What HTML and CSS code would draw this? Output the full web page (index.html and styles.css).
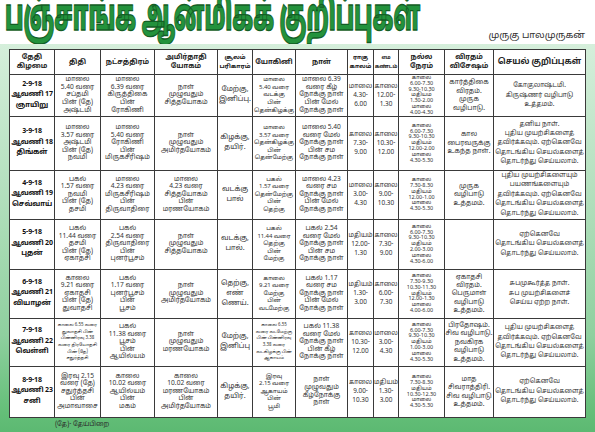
FILE: index.html
```html
<!DOCTYPE html>
<html lang="ta">
<head>
<meta charset="utf-8">
<link rel="stylesheet" href="styles.css">
</head>
<body>
<header class="head">
  <h1 class="title"><span class="title-in">பஞ்சாங்க ஆன்மிகக் குறிப்புகள்</span></h1>
  <div class="author">முருகு பாலமுருகன்</div>
</header>
<section class="panel">
<table class="pt">
  <colgroup>
    <col class="c1"><col class="c2"><col class="c3"><col class="c4"><col class="c5"><col class="c6">
    <col class="c7"><col class="c8"><col class="c9"><col class="c10"><col class="c11"><col class="c12">
  </colgroup>
  <thead>
    <tr class="hr">
      <th>தேதி<br>கிழமை</th><th>திதி</th><th>நட்சத்திரம்</th><th>அமிர்தாதி<br>யோகம்</th><th class="md">சூலம்<br>பரிகாரம்</th><th>யோகினி</th><th>நாள்</th><th class="sm">ராகு<br>காலம்</th><th class="xs">எம<br>கண்டம்</th><th>நல்ல<br>நேரம்</th><th>விரதம்<br>விசேஷம்</th><th class="big">செயல் குறிப்புகள்</th>
    </tr>
  </thead>
  <tbody>
    <tr class="r1">
      <td class="d">2-9-18<br>ஆவணி 17<br>ஞாயிறு</td>
      <td>மாலை<br>5.40 வரை<br>சப்தமி<br>பின் (தே)<br>அஷ்டமி</td>
      <td>மாலை<br>6.39 வரை<br>கிருத்திகை<br>பின்<br>ரோகிணி</td>
      <td>நாள்<br>முழுவதும்<br>சித்தயோகம்</td>
      <td class="s">மேற்கு,<br>இனிப்பு.</td>
      <td class="y">மாலை<br>5.40 வரை<br>வடக்கு<br>பின்<br>தென்கிழக்கு</td>
      <td>மாலை 6.39<br>வரை கீழ்<br>நோக்கு நாள்<br>பின் மேல்<br>நோக்கு நாள்</td>
      <td class="t">மாலை<br>4.30-<br>6.00</td>
      <td class="t">காலை<br>12.00-<br>1.30</td>
      <td class="n">காலை<br>6.00-7.30<br>9.30-10.30<br>மதியம்<br>1.30-2.00<br>மாலை<br>4.00-4.30</td>
      <td class="v">கார்த்திகை<br>விரதம்.<br>முருக<br>வழிபாடு.</td>
      <td class="k">கோகுலாஷ்டமி.<br>கிருஷ்ணர் வழிபாடு<br>உத்தமம்.</td>
    </tr>
    <tr class="r2">
      <td class="d">3-9-18<br>ஆவணி 18<br>திங்கள்</td>
      <td>மாலை<br>3.57 வரை<br>அஷ்டமி<br>பின் (தே)<br>நவமி</td>
      <td>மாலை<br>5.40 வரை<br>ரோகிணி<br>பின்<br>மிருகசீரிஷம்</td>
      <td>நாள்<br>முழுவதும்<br>அமிர்தயோகம்</td>
      <td class="s">கிழக்கு,<br>தயிர்.</td>
      <td class="y">மாலை<br>3.57 வரை<br>தென்கிழக்கு<br>பின்<br>தென்மேற்கு</td>
      <td>மாலை 5.40<br>வரை மேல்<br>நோக்கு நாள்<br>பின் சம<br>நோக்கு நாள்</td>
      <td class="t">காலை<br>7.30-<br>9.00</td>
      <td class="t">காலை<br>10.30-<br>12.00</td>
      <td class="n">காலை<br>6.00-7.30<br>9.30-10.30<br>மதியம்<br>12.00-2.00<br>மாலை<br>4.30-5.30</td>
      <td class="v">கால<br>பைரவருக்கு<br>உகந்த நாள்.</td>
      <td class="k">தனிய நாள்.<br>புதிய முயற்சிகளைத்<br>தவிர்க்கவும். ஏற்கெனவே<br>தொடங்கிய செயல்களைத்<br>தொடர்ந்து செய்யலாம்.</td>
    </tr>
    <tr class="r3">
      <td class="d">4-9-18<br>ஆவணி 19<br>செவ்வாய்</td>
      <td>பகல்<br>1.57 வரை<br>நவமி<br>பின் (தே)<br>தசமி</td>
      <td>மாலை<br>4.23 வரை<br>மிருகசீரிஷம்<br>பின்<br>திருவாதிரை</td>
      <td>மாலை<br>4.23 வரை<br>சித்தயோகம்<br>பின்<br>மரணயோகம்</td>
      <td class="s">வடக்கு<br>பால்</td>
      <td class="y">பகல்<br>1.57 வரை<br>தென்மேற்கு<br>பின்<br>தெற்கு</td>
      <td>மாலை 4.23<br>வரை சம<br>நோக்கு நாள்<br>பின் மேல்<br>நோக்கு நாள்</td>
      <td class="t">மாலை<br>3.00-<br>4.30</td>
      <td class="t">காலை<br>9.00-<br>10.30</td>
      <td class="n">காலை<br>7.30-8.30<br>மதியம்<br>12.00-1.00<br>மாலை<br>4.30-5.30</td>
      <td class="v">முருக<br>வழிபாடு<br>உத்தமம்.</td>
      <td class="k">புதிய முயற்சிகளையும்<br>பயணங்களையும்<br>தவிர்க்கவும். ஏற்கெனவே<br>தொடங்கிய செயல்களைத்<br>தொடர்ந்து செய்யலாம்.</td>
    </tr>
    <tr class="r4">
      <td class="d">5-9-18<br>ஆவணி 20<br>புதன்</td>
      <td>பகல்<br>11.44 வரை<br>தசமி<br>பின் (தே)<br>ஏகாதசி</td>
      <td>பகல்<br>2.54 வரை<br>திருவாதிரை<br>பின்<br>புனர்பூசம்</td>
      <td>நாள்<br>முழுவதும்<br>சித்தயோகம்</td>
      <td class="s">வடக்கு,<br>பால்.</td>
      <td class="y">பகல்<br>11.44 வரை<br>தெற்கு<br>பின்<br>மேற்கு</td>
      <td>பகல் 2.54<br>வரை மேல்<br>நோக்கு நாள்<br>பின் சம<br>நோக்கு நாள்</td>
      <td class="t">மதியம்<br>12.00-<br>1.30</td>
      <td class="t">காலை<br>7.30-<br>9.00</td>
      <td class="n">காலை<br>6.00-7.30<br>9.30-10.30<br>மதியம்<br>2.00-3.00<br>மாலை<br>4.30-6.00</td>
      <td class="v"></td>
      <td class="k">ஏற்கெனவே<br>தொடங்கிய செயல்களைத்<br>தொடர்ந்து செய்யலாம்.</td>
    </tr>
    <tr class="r5">
      <td class="d">6-9-18<br>ஆவணி 21<br>வியாழன்</td>
      <td>காலை<br>9.21 வரை<br>ஏகாதசி<br>பின் (தே)<br>துவாதசி</td>
      <td>பகல்<br>1.17 வரை<br>புனர்பூசம்<br>பின்<br>பூசம்</td>
      <td>நாள்<br>முழுவதும்<br>அமிர்தயோகம்</td>
      <td class="s">தெற்கு,<br>எண்<br>ணெய்.</td>
      <td class="y">காலை<br>9.21 வரை<br>மேற்கு<br>பின்<br>வடமேற்கு</td>
      <td>பகல் 1.17<br>வரை சம<br>நோக்கு நாள்<br>பின் மேல்<br>நோக்கு நாள்</td>
      <td class="t">மதியம்<br>1.30-<br>3.00</td>
      <td class="t">காலை<br>6.00-<br>7.30</td>
      <td class="n">காலை<br>7.30-9.30<br>10.30-11.30<br>மதியம்<br>12.00-1.30<br>மாலை<br>4.00-6.00</td>
      <td class="v">ஏகாதசி<br>விரதம்.<br>பெருமாள்<br>வழிபாடு<br>உத்தமம்.</td>
      <td class="k">சுபமுகூர்த்த நாள்.<br>சுப முயற்சிகளைச்<br>செய்ய ஏற்ற நாள்.</td>
    </tr>
    <tr class="r6">
      <td class="d">7-9-18<br>ஆவணி 22<br>வெள்ளி</td>
      <td class="tiny">காலை 6.55 வரை<br>துவாதசி பின்<br>பின்னிரவு 3.38<br>வரை திரயோதசி<br>பின் (தே)<br>சதுர்த்தசி</td>
      <td>பகல்<br>11.38 வரை<br>பூசம்<br>பின்<br>ஆயில்யம்</td>
      <td>நாள்<br>முழுவதும்<br>மரணயோகம்</td>
      <td class="s">மேற்கு,<br>இனிப்பு</td>
      <td class="tiny">காலை 6.55<br>வரை வடமேற்கு<br>பின் பின்னிரவு<br>3.38 வரை<br>வடகிழக்கு பின்<br>ஆகாயம்</td>
      <td>பகல் 11.38<br>வரை மேல்<br>நோக்கு நாள்<br>பின் கீழ்<br>நோக்கு நாள்</td>
      <td class="t">காலை<br>10.30-<br>12.00</td>
      <td class="t">மாலை<br>3.00-<br>4.30</td>
      <td class="n">காலை<br>6.00-7.30<br>9.30-10.30<br>மதியம்<br>1.00-3.00<br>மாலை<br>4.30-5.30</td>
      <td class="v">பிரதோஷம்.<br>சிவ வழிபாடு.<br>நவகிரக<br>வழிபாடு<br>உத்தமம்.</td>
      <td class="k">புதிய முயற்சிகளைத்<br>தவிர்க்கவும். ஏற்கெனவே<br>தொடங்கிய செயல்களைத்<br>தொடர்ந்து செய்யலாம்.</td>
    </tr>
    <tr class="r7">
      <td class="d">8-9-18<br>ஆவணி 23<br>சனி</td>
      <td>இரவு 2.15<br>வரை (தே)<br>சதுர்த்தசி<br>பின்<br>அமாவாசை</td>
      <td>காலை<br>10.02 வரை<br>ஆயில்யம்<br>பின்<br>மகம்</td>
      <td>காலை<br>10.02 வரை<br>மரணயோகம்<br>பின்<br>அமிர்தயோகம்</td>
      <td class="s">கிழக்கு,<br>தயிர்.</td>
      <td class="y">இரவு<br>2.15 வரை<br>ஆகாயம்<br>பின்<br>பூமி</td>
      <td>நாள்<br>முழுவதும்<br>கீழ்நோக்கு<br>நாள்</td>
      <td class="t">காலை<br>9.00-<br>10.30</td>
      <td class="t">மதியம்<br>1.30-<br>3.00</td>
      <td class="n">காலை<br>7.30-8.30<br>மதியம்<br>10.30-12.30<br>மாலை<br>4.30-5.30</td>
      <td class="v">மாத<br>சிவராத்திரி.<br>சிவ வழிபாடு<br>உத்தமம்.</td>
      <td class="k">ஏற்கெனவே<br>தொடங்கிய செயல்களைத்<br>தொடர்ந்து செய்யலாம்.</td>
    </tr>
  </tbody>
</table>
<p class="note">(தே)- தேய்பிறை</p>
</section>
</body>
</html>
```

FILE: styles.css
```css
html, body {
  margin: 0;
  padding: 0;
}
body {
  width: 595px;
  height: 432px;
  overflow: hidden;
  background: #fff;
  font-family: "Noto Sans Tamil", "Lohit Tamil", "Noto Sans", "DejaVu Sans", sans-serif;
  color: #2b2b2b;
}
.head {
  height: 44px;
  display: flex;
  align-items: flex-end;
  padding: 0 10px 0 5px;
  box-sizing: border-box;
}
.title {
  flex: none;
  width: 425px;
  height: 44px;
  margin: 0;
  overflow: hidden;
  white-space: nowrap;
}
.title-in {
  display: inline-block;
  font-size: 44px;
  line-height: 48px;
  margin-top: -5px;
  font-weight: 900;
  color: #23923c;
  -webkit-text-stroke: 1.3px #135e25;
  transform: scaleX(0.49);
  transform-origin: left top;
}
.author {
  margin-left: auto;
  font-size: 9.5px;
  line-height: 12px;
  color: #333;
  margin-bottom: 2px;
}
.panel {
  height: 388px;
  box-sizing: border-box;
  padding: 5px 10px 0 9px;
  background: linear-gradient(to bottom, #d5efdb 0%, #b6e1c0 35%, #8fd09f 75%, #64be78 95%, #5cb972 100%);
}
.pt {
  width: 576px;
  border-collapse: collapse;
  table-layout: fixed;
  background: #fff;
  border: 1.5px solid #333;
}
.c1 { width: 45px; }
.c2 { width: 46px; }
.c3 { width: 54px; }
.c4 { width: 63px; }
.c5 { width: 35px; }
.c6 { width: 43px; }
.c7 { width: 52px; }
.c8 { width: 26px; }
.c9 { width: 25px; }
.c10 { width: 46px; }
.c11 { width: 49px; }
.c12 { width: 92px; }
.pt th, .pt td {
  border: 1px solid #3a3a3a;
  padding: 0;
  text-align: center;
  vertical-align: middle;
  overflow: hidden;
  white-space: nowrap;
}
.pt th {
  font-size: 7px;
  line-height: 9px;
  font-weight: 700;
  color: #222;
}
.pt th.md { font-size: 6.2px; letter-spacing: -0.1px; }
.pt th.sm { font-size: 6px; }
.pt th.xs { font-size: 5.2px; letter-spacing: -0.1px; }
.pt th.big { font-size: 8px; }
.pt td {
  font-size: 6.6px;
  line-height: 7.6px;
  color: #333;
}
.pt td.d {
  font-size: 7px;
  line-height: 10.5px;
  font-weight: 700;
  letter-spacing: -0.15px;
  color: #111;
}
.pt td.y { font-size: 6px; letter-spacing: -0.1px; }
.pt td.s { font-size: 7.2px; line-height: 10px; }
.pt td.t { font-size: 6.4px; line-height: 9px; }
.pt td.n { font-size: 5.4px; line-height: 5.8px; }
.pt td.v { font-size: 6.6px; line-height: 8.4px; }
.pt td.k { font-size: 6.4px; line-height: 9.4px; }
.pt td.tiny { font-size: 4.4px; line-height: 6.6px; }
.hr { height: 25px; }
.r1 { height: 40px; }
.r2 { height: 54px; }
.r3 { height: 49px; }
.r4 { height: 50px; }
.r5 { height: 49px; }
.r6 { height: 48px; }
.r7 { height: 51px; }
.note {
  margin: 2px 0 0 46px;
  font-size: 6.5px;
  line-height: 8px;
  color: #2b2b2b;
}
```
